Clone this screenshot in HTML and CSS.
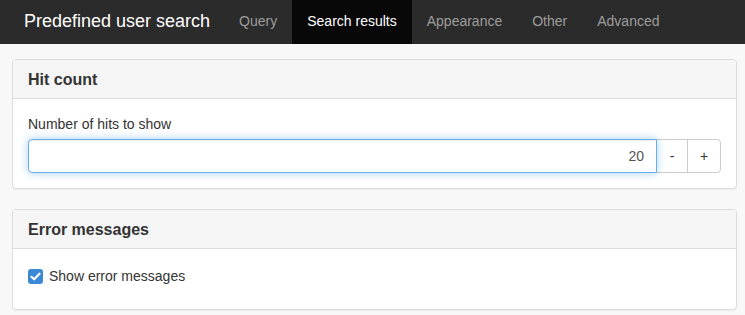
FILE: index.html
```html
<!DOCTYPE html>
<html lang="en">
<head>
  <meta charset="UTF-8">
  <meta name="viewport" content="width=device-width, initial-scale=1.0">
  <title>Predefined user search</title>
  <link rel="stylesheet" href="styles.css">
</head>
<body>
  <nav class="navbar">
    <span class="brand">Predefined user search</span>
    <a class="nav-link">Query</a>
    <a class="nav-link active">Search results</a>
    <a class="nav-link">Appearance</a>
    <a class="nav-link">Other</a>
    <a class="nav-link">Advanced</a>
  </nav>

  <main class="content">
    <!-- Hit count -->
    <div class="panel">
      <div class="panel-heading">Hit count</div>
      <div class="panel-body">
        <label class="field-label">Number of hits to show</label>
        <div class="input-group">
          <input type="text" class="form-control" value="20">
          <button class="step-btn">-</button>
          <button class="step-btn last">+</button>
        </div>
      </div>
    </div>

    <!-- Error messages -->
    <div class="panel">
      <div class="panel-heading">Error messages</div>
      <div class="panel-body">
        <label class="check">
          <span class="check-box">
            <svg width="11" height="9" viewBox="0 0 11 9"><path d="M1.5 4.8 L4.2 7.3 L9.5 1.7" fill="none" stroke="#fff" stroke-width="2.2" stroke-linecap="round" stroke-linejoin="round"/></svg>
          </span>
          Show error messages
        </label>
      </div>
    </div>
  </main>
</body>
</html>
```

FILE: styles.css
```css
/* ======= Global ======= */
body {
  margin: 0;
  font-family: "Liberation Sans", Arial, sans-serif;
  font-size: 14px;
  line-height: 20px;
  color: #333;
  background: #f8f8f8;
}

/* Navbar */
.navbar {
  display: flex;
  align-items: stretch;
  height: 44px;
  background: #2b2b2b;
  padding-left: 9px;
}

.brand {
  padding: 11px 14px 13px 15px;
  font-size: 18px;
  line-height: 20px;
  color: #fff;
}

.nav-link {
  padding: 11px 15px 13px;
  color: #9d9d9d;
  text-decoration: none;
}

.nav-link.active {
  background: #080808;
  color: #fff;
}

/* Content */
.content {
  padding: 15px 8px 0 12px;
}

.panel {
  background: #fff;
  border: 1px solid #ddd;
  border-radius: 4px;
  margin-bottom: 20px;
  box-shadow: 0 1px 1px rgba(0, 0, 0, 0.05);
}

.panel-heading {
  background: #f5f5f5;
  border-bottom: 1px solid #ddd;
  border-radius: 3px 3px 0 0;
  padding: 10px 15px 9px;
  font-size: 16px;
  line-height: 19px;
  font-weight: bold;
}

.panel-body {
  padding: 15px;
}

.field-label {
  display: block;
  margin-bottom: 5px;
}

/* Input group */
.input-group {
  display: flex;
}

.form-control {
  flex: 1;
  height: 34px;
  box-sizing: border-box;
  padding: 6px 12px;
  font: inherit;
  color: #555;
  text-align: right;
  border: 1px solid #66afe9;
  border-radius: 4px 0 0 4px;
  box-shadow: inset 0 1px 1px rgba(0, 0, 0, 0.075), 0 0 8px rgba(102, 175, 233, 0.6);
  outline: none;
  position: relative;
  z-index: 1;
}

.step-btn {
  width: 32px;
  height: 34px;
  padding: 0;
  margin-left: -1px;
  font: inherit;
  color: #333;
  background: #fff;
  border: 1px solid #ccc;
}

.step-btn.last {
  width: 34px;
  border-radius: 0 4px 4px 0;
}

/* Checkbox */
.check {
  display: flex;
  align-items: center;
  gap: 6px;
  padding-top: 2px;
  padding-bottom: 8px;
}

.check-box {
  width: 15px;
  height: 15px;
  border-radius: 3px;
  background: #3b88d4;
  display: flex;
  align-items: center;
  justify-content: center;
}
```
